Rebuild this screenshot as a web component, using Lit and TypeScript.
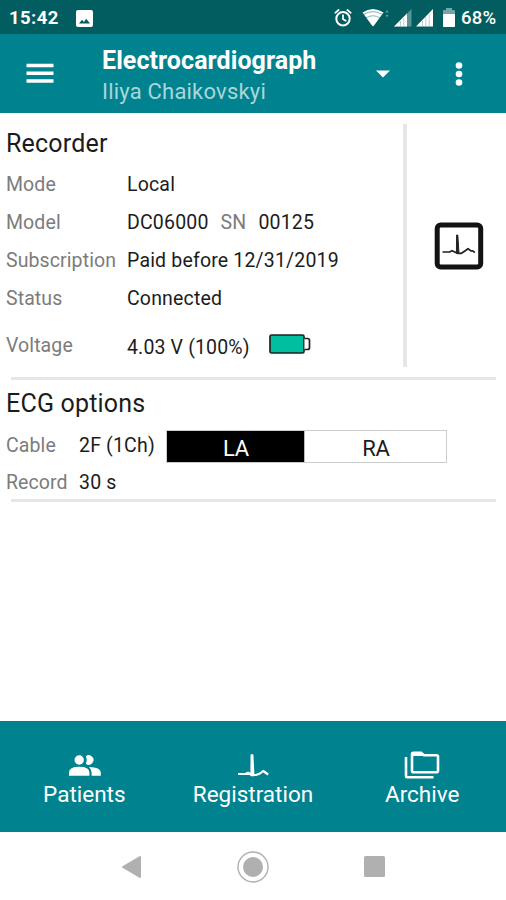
import { LitElement, html, css } from "lit";
import { customElement, state, property } from "lit/decorators.js";
import { classMap } from "lit/directives/class-map.js";

@customElement("status-bar")
class StatusBar extends LitElement {
  static styles = css`
    :host { display: flex; align-items: center; height: 34px; background: #015d60; color: #fff;
      font-weight: 700; font-size: 18.5px; padding: 2px 8px 0 9px; box-sizing: border-box; }
    .time { width: 50px; letter-spacing: 0.4px; }
    .photo { margin-left: 17px; }
    .tray { margin-left: auto; display: block; }
    .level { width: 37px; margin-left: 4px; letter-spacing: 0.2px; font-weight: 500; white-space: nowrap; }
    svg { display: block; }
  `;
  render() {
    return html`
      <span class="time">15:42</span>
      <svg class="photo" width="17" height="17" viewBox="0 0 17 17">
        <rect width="17" height="17" rx="2" fill="#fff" />
        <path d="M3 13.5l3-3.8 2 2.2 2.2-3.2 3.8 4.8z" fill="#015d60" />
      </svg>
      <svg class="tray" width="123" height="20" viewBox="0 0 123 20" fill="#fff">
        <g fill="none" stroke="#fff" stroke-width="2" stroke-linecap="round">
          <circle cx="9" cy="10.800" r="6.700" />
          <path d="M9 7v4.200l2.800 1.600M1.200 4.800L4.600 2M16.800 4.800L13.400 2" stroke-width="1.700" />
        </g>
        <path d="M28.500 4.500Q39 -2.500 49.500 4.500L40 17.500q-1 1.300-2 0z" />
        <g fill="none" stroke="#015d60" stroke-width=".8" opacity=".6"><path d="M29.500 6.500Q39 .8 48.500 6.500M32 10Q39 5.500 46 10" /></g>
        <path d="M51.500 4.500l1.500-2.500L54.500 4.500zM51.500 7h3L53 9.500z" opacity=".4" />
        <path d="M60 18.500L77.500 1v17.500z" opacity=".35" />
        <path d="M60 18.500L73 5.500V18.500z" />
        <path d="M82 18.500L99 1v17.500z" />
        <path d="M66.500 13v5M69.800 10v8M88.500 13v5M91.800 9v9M95.200 6v12" stroke="#015d60" stroke-width=".7" opacity=".4" />
        <rect x="109" y="2" width="12" height="17" rx="1" opacity=".45" />
        <rect x="112" y="0" width="6" height="2" opacity=".45" />
        <rect x="109" y="6" width="12" height="13" rx="1" />
      </svg>
      <span class="level">68%</span>
    `;
  }
}

@customElement("app-header")
class AppHeader extends LitElement {
  static styles = css`
    :host { display: grid; grid-template-columns: 102px 1fr 58px 94px; align-items: center; height: 79px;
      background: #00838f; color: #fff; box-sizing: border-box; }
    svg { display: block; }
    .menu { margin-left: 26px; }
    .title { font-size: 25px; font-weight: 700; line-height: 31px; letter-spacing: 0.07px; margin-top: -3px; }
    .sub { font-size: 22px; line-height: 31px; color: #a9d6da; letter-spacing: 0.2px; }
    .titles { white-space: nowrap; height: 100%; padding-top: 14px; box-sizing: border-box; }
    .caret, .dots { justify-self: center; }
  `;
  render() {
    return html`
      <svg class="menu" width="28" height="21" viewBox="0 0 28 21" fill="#fff">
        <path d="M0.500 .700h27v3.600h-27zM.500 8.500h27v3.600h-27zM.500 16.200h27v3.600h-27z" />
      </svg>
      <div class="titles">
        <div class="title">Electrocardiograph</div>
        <div class="sub">Iliya Chaikovskyi</div>
      </div>
      <svg class="caret" width="14" height="8" viewBox="0 0 14 8"><path d="M0 .500h14L7 7.500z" fill="#fff" /></svg>
      <svg class="dots" width="8" height="24" viewBox="0 0 8 24" fill="#fff">
        <circle cx="4" cy="3.500" r="3.300" /><circle cx="4" cy="12" r="3.300" /><circle cx="4" cy="20.500" r="3.300" />
      </svg>
    `;
  }
}

@customElement("info-row")
class InfoRow extends LitElement {
  @property() label = "";
  static styles = css`
    :host { display: grid; grid-template-columns: var(--label-width, 121px) 1fr; height: 38px; line-height: 38px;
      font-size: 19.500px; white-space: nowrap; }
    .label { color: #7c7c7c; letter-spacing: 0.1px; }
    .value { color: #1c1c1c; display: flex; letter-spacing: 0.18px; }
  `;
  render() {
    return html`<span class="label">${this.label}</span><span class="value"><slot></slot></span>`;
  }
}

@customElement("app-root")
class AppRoot extends LitElement {
  @state() lead = "LA";

  static styles = css`
    :host { display: flex; flex-direction: column; height: 900px; background: #fff;
      font-family: Roboto, "Liberation Sans", sans-serif; }
    svg { display: block; }
    main { flex: 1; }
    .recorder { display: grid; grid-template-columns: 403px 4px 1fr; height: 264px; }
    .details { padding: 12px 0 0 6px; }
    h2 { margin: 0; font-weight: 400; font-size: 25px; line-height: 38px; color: #1c1c1c; letter-spacing: 0.2px; }
    .details h2 { margin-bottom: 3px; }
    .sn { color: #7c7c7c; margin: 0 12px; }
    .voltage { margin-top: 9px; }
    .volt { margin-top: 2px; letter-spacing: 0.15px; }
    .cell { margin: 7px 0 0 19px; }
    .divider { background: #e6e6e6; margin: 11px 0 10px; }
    .device { display: grid; place-items: center; padding: 2px 0 0 4px; }
    .rule { height: 3px; background: #e6e6e6; margin: 0 10px 1px 11px; }
    .options { height: 118px; padding: 3px 0 0 6px; box-sizing: border-box; --label-width: 73px; }
    .options h2 { line-height: 40px; }
    .cable { display: flex; padding-top: 3px; height: 37px; }
    .cable info-row { width: 160px; }
    .leads { display: flex; width: 281px; height: 33px; margin-top: 3px; box-sizing: border-box; border: 1px solid #ccc; }
    .lead { flex: 1; display: grid; place-items: center; font-size: 22px; line-height: 30px; padding: 3px 0 0 1px;
      height: 31px; box-sizing: border-box; letter-spacing: -0.3px; color: #1c1c1c; background: #fff; }
    .lead.on { background: #000; color: #fff; flex: 0 0 138px; box-sizing: border-box; border-right: 1px solid #bbb; }
    nav { display: grid; grid-template-columns: repeat(3, 1fr); height: 111px; background: #00838f; color: #fff; }
    .tab { display: flex; flex-direction: column; align-items: center; font-size: 22.500px; line-height: 28px; padding-top: 29px; }
    .tab svg { margin-bottom: 1px; }
    .tab:last-child { padding-left: 1px; }
    .system { display: grid; grid-template-columns: 193px 120px 123px; height: 68px; }
    .key { display: grid; place-items: center; padding-top: 1px; }
    .key.back { padding-left: 69px; }
  `;

  render() {
    return html`
      <status-bar></status-bar>
      <app-header></app-header>
      <main>
        <section class="recorder">
          <div class="details">
            <h2>Recorder</h2>
            <info-row label="Mode">Local</info-row>
            <info-row label="Model">DC06000<span class="sn">SN</span>00125</info-row>
            <info-row label="Subscription">Paid before 12/31/2019</info-row>
            <info-row label="Status">Connected</info-row>
            <info-row class="voltage" label="Voltage">
              <span class="volt">4.03 V (100%)</span>
              <svg class="cell" width="42" height="20" viewBox="0 0 42 20" stroke="#222" stroke-width="1.700">
                <rect x="1" y="1" width="34" height="18" rx="1.500" fill="#00bfa0" />
                <path d="M35.500 4.500h3q2 0 2 2v7q0 2-2 2h-3" fill="#fff" />
              </svg>
            </info-row>
          </div>
          <div class="divider"></div>
          <div class="device">
            <svg width="50" height="48" viewBox="0 0 50 48">
              <rect x="3.200" y="3" width="43.500" height="42" rx="3.500" fill="#fff" stroke="#111315" stroke-width="5" />
              <g fill="none" stroke="#222" stroke-width="1.700" stroke-linejoin="round">
                <path d="M8.500 30h7l2.500-1.300 5.500 2.600h4l3-2 3.500-2.600 3 2.200h1.800l2 1.800" />
                <path d="M22.600 13h1.200l1.200 18.500h-2.600z" fill="#222" stroke-width="1" />
              </g>
            </svg>
          </div>
        </section>
        <div class="rule"></div>
        <section class="options">
          <h2>ECG options</h2>
          <div class="cable">
            <info-row label="Cable">2F (1Ch)</info-row>
            <div class="leads">
              ${["LA", "RA"].map((name) => html`
                <div class=${classMap({ lead: true, on: name === this.lead })} @click=${() => (this.lead = name)}>${name}</div>`)}
            </div>
          </div>
          <info-row label="Record">30 s</info-row>
        </section>
        <div class="rule"></div>
      </main>
      <nav>
        <div class="tab">
          <svg width="34" height="29" viewBox="0 0 34 29" fill="#fff">
            <circle cx="12.200" cy="10" r="4.700" />
            <path d="M2 25.800v-3.300q0-5.700 10.200-5.700t10.200 5.700v3.300z" />
            <path d="M18.800 6.300a4.700 4.700 0 1 1 0 7.400q1.800-3.700 0-7.400z" />
            <path d="M22 17Q33.800 17.300 33.800 22.500v3.300h-9.200v-3.300q0-3.300-2.600-5.500z" />
          </svg>
          Patients
        </div>
        <div class="tab">
          <svg width="32" height="29" viewBox="0 0 32 29" fill="none" stroke="#fff" stroke-width="2.200" stroke-linejoin="round">
            <path d="M1 24h7.500l2.500-1.300 4 2.300h4l4-1.500 3.200-2.500 5 3.500" />
            <path d="M14.300 5h1.400l1 20.500h-2.600z" fill="#fff" stroke-width="1.500" />
          </svg>
          Registration
        </div>
        <div class="tab">
          <svg width="36" height="29" viewBox="0 0 36 29" fill="none" stroke="#fff" stroke-width="2.600">
            <path d="M9.500 2.800h7.500l3 2.500h12.500q1.500 0 1.500 1.500v14q0 1.500-1.500 1.500h-23Q8 22.300 8 20.800V4.300q0-1.500 1.500-1.500z" />
            <path d="M2 7V26.300q0 1 1 1h26.500" />
            <path d="M9 2.500h8l3 3.500H9z" fill="#fff" stroke="none" />
          </svg>
          Archive
        </div>
      </nav>
      <footer class="system">
        <div class="key back">
          <svg width="21" height="24" viewBox="0 0 21 24"><path d="M2 12L19 2v20z" fill="#b0b0b0" stroke="#b0b0b0" stroke-width="2" stroke-linejoin="round" /></svg>
        </div>
        <div class="key">
          <svg width="32" height="32" viewBox="0 0 32 32"><circle cx="16" cy="16" r="15" fill="none" stroke="#b0b0b0" stroke-width="1.400" /><circle cx="16" cy="16" r="10" fill="#b0b0b0" /></svg>
        </div>
        <div class="key">
          <svg width="21" height="21"><rect width="21" height="21" rx="1.500" fill="#b0b0b0" /></svg>
        </div>
      </footer>
    `;
  }
}
